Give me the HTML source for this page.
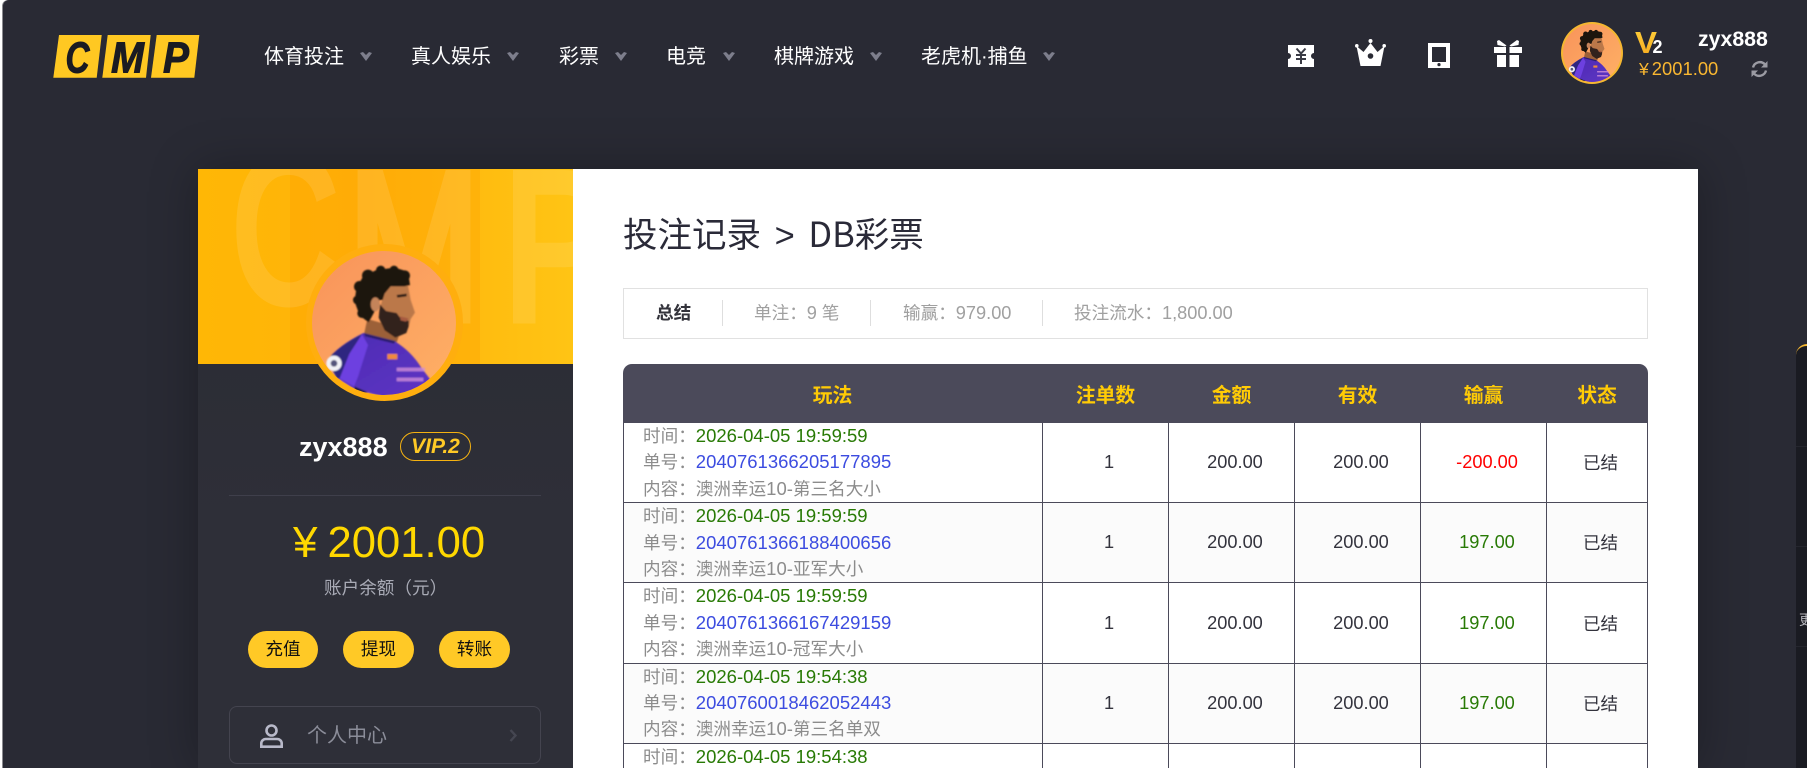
<!DOCTYPE html>
<html lang="zh-CN">
<head>
<meta charset="utf-8">
<title>投注记录</title>
<style>
*{box-sizing:border-box;margin:0;padding:0}
html,body{width:1807px;height:768px;overflow:hidden;background:#fff}
body{font-family:"Liberation Sans","Noto Sans CJK SC",sans-serif;position:relative}
.t{position:absolute;white-space:nowrap}
#page{position:absolute;left:3px;top:0;width:1804px;height:768px;background:#292a34;border-top-left-radius:6px;box-shadow:-1px 0 0 #8b8b90}
.nav{top:44px;font-size:20px;line-height:26px;color:#fff}
.chev{position:absolute;top:52px;width:12px;height:9px}
.abs{position:absolute}
#wrap{position:absolute;left:198px;top:169px;width:1500px;height:599px;box-shadow:0 0 45px rgba(0,0,0,.28)}
#side{position:absolute;left:198px;top:169px;width:375px;height:599px;background:linear-gradient(#2a2b33,#2e2f38 60%);overflow:hidden}
#main{position:absolute;left:573px;top:169px;width:1125px;height:599px;background:#fff}
.btn{position:absolute;top:631px;height:37px;background:#ffc926;border-radius:19px;text-align:center;font-size:17.6px;line-height:36px;color:#111}
#sum{position:absolute;left:623px;top:288px;width:1025px;height:51px;border:1px solid #e1e1e1}
.dv{position:absolute;top:300px;width:1px;height:26px;background:#dedede}
.s{top:300px;font-size:17.6px;line-height:26px;color:#a0a0a0}
.n{font-size:18.2px}
#tw{position:absolute;left:623px;top:364px;width:1025px;height:404px;overflow:hidden}
table{width:1025px;border-collapse:separate;border-spacing:0;table-layout:fixed;background:#fff}
th{height:59px;background:#4b4a5a;color:#ffcb05;font-size:19.8px;font-weight:700;text-align:center;padding-right:1px}
th:first-child{border-top-left-radius:9px}
th:last-child{border-top-right-radius:9px}
td{height:79.4px;border-bottom:1px solid #4b4a5a;border-right:1px solid #4b4a5a;text-align:center;padding-left:7px;font-size:17.6px;color:#33333d;vertical-align:middle}
td:first-child{border-left:1px solid #4b4a5a;text-align:left;padding-left:19px;color:#8c8c8c;line-height:26.4px;vertical-align:top}
td:first-child .v{font-size:18.5px}
tr:nth-child(even) td{background:#fbfbfb}
.g{color:#287a05}.b{color:#3c4ce0}.r{color:#ff0000}
.v{font-size:18.2px}
#rp{position:absolute;left:1796px;top:344px;width:11px;height:424px;background:#1a1b22;border-top:2px solid #f5b731;border-top-left-radius:12px;overflow:hidden}
</style>
</head>
<body>
<svg width="0" height="0" style="position:absolute">
<defs>
<linearGradient id="ag" x1="0" y1="0" x2="1" y2="1"><stop offset="0" stop-color="#f8925a"/><stop offset="1" stop-color="#ffb266"/></linearGradient>
<linearGradient id="vg" x1="0" y1="0" x2="0" y2="1"><stop offset="0" stop-color="#ffd23c"/><stop offset="1" stop-color="#f5a81e"/></linearGradient>
<linearGradient id="sg" x1="0" y1="0" x2="1" y2="1"><stop offset="0" stop-color="#4a2bb2"/><stop offset="1" stop-color="#5f33c4"/></linearGradient>
<clipPath id="ac"><circle cx="238" cy="234" r="216"/></clipPath>
<filter id="bl" x="-5%" y="-5%" width="110%" height="110%"><feGaussianBlur stdDeviation="2.2"/></filter>
<symbol id="head" viewBox="22 18 432 432">
<g clip-path="url(#ac)">
<rect x="0" y="0" width="480" height="480" fill="url(#ag)"/>
<g filter="url(#bl)">
<path d="M188 222L290 250L275 296L178 268Z" fill="#9c6039"/>
<path d="M66 347Q100 302 176 264L272 290Q320 320 350 368L378 405L350 445L240 456L150 432L96 398Z" fill="url(#sg)"/>
<path d="M68 345Q105 300 172 268L132 330L105 400L96 398Z" fill="#2d2880"/>
<path d="M172 268L190 300L160 395L148 425L105 400L135 325Z" fill="#6d3fe0"/>
<path d="M178 264L272 288L268 296L182 274Z" fill="#2a1f70"/>
<path d="M150 425L190 442L150 450Z" fill="#201a3a"/>
<path d="M236 150L252 124L310 122L318 165L331 203L318 222L314 238L305 262L270 276L232 240L224 200Z" fill="#bb784a"/>
<path d="M226 178L244 198L276 204L286 218L312 228L312 244L305 264L272 278L240 256L222 218Z" fill="#33201a"/>
<path d="M286 214L312 220L304 230L288 226Z" fill="#a65a40"/>
<path d="M276 150L306 146L306 154L278 158Z" fill="#2a1a12"/>
<path d="M150 170L155 130L175 95L215 75L270 68L310 80L316 120L300 124L258 124L240 146L234 165L225 165L212 195L192 232L165 212Z" fill="#1b1310"/>
<circle cx="165" cy="125" r="17" fill="#1b1310"/><circle cx="190" cy="92" r="18" fill="#1b1310"/><circle cx="228" cy="76" r="14" fill="#1b1310"/><circle cx="268" cy="75" r="13" fill="#1b1310"/><circle cx="300" cy="92" r="16" fill="#1b1310"/><circle cx="158" cy="165" r="13" fill="#1b1310"/><circle cx="172" cy="205" r="14" fill="#1b1310"/>
<ellipse cx="212" cy="178" rx="14" ry="21" fill="#c4845a"/>
<circle cx="88" cy="355" r="23" fill="#f2f2f6"/>
<circle cx="88" cy="355" r="10" fill="#55557c"/>
<rect x="248" y="327" width="30" height="16" fill="#f08a3c"/>
<rect x="276" y="368" width="85" height="11" fill="#cf8fd8" opacity=".8"/>
<rect x="276" y="398" width="80" height="11" fill="#cf8fd8" opacity=".8"/>
</g>
</g>
</symbol>
</defs>
</svg>

<div id="page"></div>

<!-- logo -->
<svg class="abs" style="left:0;top:0" width="210" height="90">
<polygon points="59,35 101.7,35 96.7,77.7 53.3,77.7" fill="#ffc822"/>
<polygon points="107.7,35 150.7,35 146,77.7 102.3,77.7" fill="#ffc822"/>
<polygon points="156.7,35 199.3,35 194.3,77.7 151,77.7" fill="#ffc822"/>
<g font-family="Liberation Sans" font-weight="700" font-style="italic" font-size="44" fill="#1a1b22" stroke="#1a1b22" stroke-width="1">
<text x="65.5" y="72.5" textLength="24" lengthAdjust="spacingAndGlyphs">C</text>
<text x="111" y="72.5" textLength="33" lengthAdjust="spacingAndGlyphs">M</text>
<text x="163" y="72.5" textLength="26" lengthAdjust="spacingAndGlyphs">P</text>
</g>
</svg>

<!-- nav -->
<div class="t nav" style="left:264px">体育投注</div>
<svg class="chev" style="left:360px" viewBox="0 0 12 9"><path d="M0 1L3 0L6 3L9 0L12 1L6 9Z" fill="#7d7e8c"/></svg>
<div class="t nav" style="left:411px">真人娱乐</div>
<svg class="chev" style="left:507px" viewBox="0 0 12 9"><path d="M0 1L3 0L6 3L9 0L12 1L6 9Z" fill="#7d7e8c"/></svg>
<div class="t nav" style="left:559px">彩票</div>
<svg class="chev" style="left:615px" viewBox="0 0 12 9"><path d="M0 1L3 0L6 3L9 0L12 1L6 9Z" fill="#7d7e8c"/></svg>
<div class="t nav" style="left:666px">电竞</div>
<svg class="chev" style="left:723px" viewBox="0 0 12 9"><path d="M0 1L3 0L6 3L9 0L12 1L6 9Z" fill="#7d7e8c"/></svg>
<div class="t nav" style="left:774px">棋牌游戏</div>
<svg class="chev" style="left:870px" viewBox="0 0 12 9"><path d="M0 1L3 0L6 3L9 0L12 1L6 9Z" fill="#7d7e8c"/></svg>
<div class="t nav" style="left:921px">老虎机·捕鱼</div>
<svg class="chev" style="left:1043px" viewBox="0 0 12 9"><path d="M0 1L3 0L6 3L9 0L12 1L6 9Z" fill="#7d7e8c"/></svg>

<!-- top right icons -->
<svg class="abs" style="left:1288px;top:45px" width="26" height="22" viewBox="0 0 26 22">
<path d="M0 0H26V8A3 3 0 0 0 26 14V22H0V14A3 3 0 0 0 0 8Z" fill="#fff"/>
<path d="M8.5 3.5L13 8.5L17.5 3.5M8 10H18M8 14H18M13 8.5V19" fill="none" stroke="#3a3b45" stroke-width="2"/>
</svg>
<svg class="abs" style="left:1355px;top:39px" width="31" height="27" viewBox="0 0 31 27">
<path d="M1.5 7L8.5 13L15.5 4L22.5 13L29.5 7L25.5 27H5.5Z" fill="#fff"/>
<circle cx="1.8" cy="6.8" r="1.8" fill="#fff"/><circle cx="15.5" cy="2" r="2" fill="#fff"/><circle cx="29.2" cy="6.8" r="1.8" fill="#fff"/>
<circle cx="15.5" cy="17" r="2.8" fill="#292a34"/>
</svg>
<svg class="abs" style="left:1428px;top:43px" width="22" height="25" viewBox="0 0 22 25">
<path fill-rule="evenodd" d="M0 0H22V25H0ZM4 4V19H18V4Z" fill="#fff"/>
<circle cx="11" cy="21.6" r="1.6" fill="#292a34"/>
</svg>
<svg class="abs" style="left:1494px;top:40px" width="28" height="27" viewBox="0 0 28 27">
<path d="M0 7H12V13H0ZM15.5 7H28V13H15.5ZM3 15H12V27H3ZM15.5 15H25V27H15.5ZM3 1L5 0L12.5 5.5L11 6.5L3.5 5ZM25 1L23 0L15.5 5.5L17 6.5L24.5 5Z" fill="#fff"/>
</svg>

<!-- small avatar -->
<div class="abs" style="left:1561px;top:22px;width:62px;height:62px;border-radius:50%;background:#f5b731"></div>
<svg class="abs" style="left:1563px;top:24px" width="58" height="58"><use href="#head" width="58" height="58"/></svg>
<svg class="abs" style="left:1630px;top:25px" width="40" height="32" viewBox="0 0 40 32">
<text x="5" y="28" font-family="Liberation Sans" font-weight="700" font-size="31" fill="url(#vg)" textLength="22" lengthAdjust="spacingAndGlyphs">V</text>
<text x="22.5" y="28" font-family="Liberation Sans" font-weight="700" font-size="18" fill="#fff">2</text>
</svg>
<div class="t" style="left:1698px;top:26px;font-size:21.3px;line-height:26px;font-weight:700;color:#fff">zyx888</div>
<div class="t" style="left:1639px;top:56px;font-size:17.6px;line-height:26px;color:#f9b731">¥<span style="margin-left:3px;font-size:18.4px">2001.00</span></div>
<svg class="abs" style="left:1751px;top:60px" width="17" height="18" viewBox="0 0 17 18">
<path d="M2 7.5A7 7 0 0 1 14 4.5M15 10.5A7 7 0 0 1 3 13.5" fill="none" stroke="#9b9ba3" stroke-width="2.4"/>
<path d="M16.5 1V7.5H10ZM.5 17V10.5H7Z" fill="#9b9ba3"/>
</svg>

<div id="wrap"></div>

<!-- sidebar -->
<div id="side">
<svg class="abs" style="left:0;top:0" width="375" height="195" viewBox="0 0 375 195">
<defs><linearGradient id="bg" x1="0" y1="0" x2="1" y2="0"><stop offset="0" stop-color="#ffb705"/><stop offset=".45" stop-color="#ffb30a"/><stop offset="1" stop-color="#ffc414"/></linearGradient></defs>
<rect width="375" height="195" fill="url(#bg)"/>
<rect x="92" y="0" width="190" height="195" fill="#ff9a00" opacity=".28"/>
<g font-family="Liberation Sans" font-size="210" fill="#ffffff" stroke="#ffffff" stroke-width="9" opacity=".1">
<text x="34" y="132" textLength="106" lengthAdjust="spacingAndGlyphs">C</text>
<text x="150" y="150" textLength="132" lengthAdjust="spacingAndGlyphs">M</text>
<text x="305" y="150" textLength="110" lengthAdjust="spacingAndGlyphs">P</text>
</g>
</svg>
</div>

<!-- big avatar -->
<div class="abs" style="left:305.5px;top:244px;width:157px;height:157px;border-radius:50%;background:#ffae0e"></div>
<svg class="abs" style="left:312px;top:251px" width="144" height="144"><use href="#head" width="144" height="144"/></svg>

<div class="t" style="left:299px;top:432px;font-size:27px;line-height:30px;font-weight:700;color:#fff">zyx888</div>
<div class="abs" style="left:400px;top:432px;width:71px;height:29px;border:1px solid #f5b211;border-radius:15px;text-align:center;font-size:21px;line-height:27px;font-weight:700;font-style:italic;color:#ffc926">VIP.2</div>
<div class="abs" style="left:229px;top:495px;width:312px;height:1px;background:#3f3f4b"></div>

<div class="t" style="left:293px;top:516px;font-size:44px;line-height:54px;color:#ffd800"><span style="font-size:44px">¥</span><span style="margin-left:10px;font-size:43.6px">2001.00</span></div>
<div class="t" style="left:324px;top:575px;font-size:17.6px;line-height:26px;color:#a9abb6">账户余额（元）</div>

<div class="btn" style="left:248px;width:70px">充值</div>
<div class="btn" style="left:343px;width:71px">提现</div>
<div class="btn" style="left:439px;width:71px">转账</div>

<div class="abs" style="left:229px;top:706px;width:312px;height:58px;border:1px solid #44444f;border-radius:8px"></div>
<svg class="abs" style="left:260px;top:724px" width="23" height="24" viewBox="0 0 23 24">
<circle cx="11.5" cy="6.5" r="5" fill="none" stroke="#b8b9c9" stroke-width="2.6"/>
<path d="M1.3 22.7V19.5A4.5 4.5 0 0 1 5.8 15H17.2A4.5 4.5 0 0 1 21.7 19.5V22.7Z" fill="none" stroke="#b8b9c9" stroke-width="2.6"/>
</svg>
<div class="t" style="left:307px;top:722px;font-size:20px;line-height:28px;color:#8b8d99">个人中心</div>
<svg class="abs" style="left:509px;top:729px" width="8" height="13" viewBox="0 0 8 13"><path d="M1.5 1L6.5 6.5L1.5 12" fill="none" stroke="#454651" stroke-width="2.4"/></svg>

<!-- main -->
<div id="main"></div>
<div class="t" style="left:623px;top:209px;font-size:34.5px;line-height:46px;color:#2a2a38;word-spacing:4px">投注记录 <span style="font-weight:400">&gt;</span> <span style="font-family:'Noto Sans CJK SC',sans-serif">DB</span>彩票</div>

<div id="sum"></div>
<div class="t s" style="left:656px;color:#33333b;font-weight:700">总结</div>
<div class="dv" style="left:722px"></div>
<div class="t s" style="left:754px">单注：<span class="n">9</span> 笔</div>
<div class="dv" style="left:870px"></div>
<div class="t s" style="left:903px">输赢：<span class="n">979.00</span></div>
<div class="dv" style="left:1042px"></div>
<div class="t s" style="left:1074px">投注流水：<span class="n">1,800.00</span></div>

<div id="tw">
<table>
<colgroup><col style="width:420px"><col style="width:126px"><col style="width:126px"><col style="width:126px"><col style="width:126px"><col style="width:101px"></colgroup>
<thead><tr><th>玩法</th><th>注单数</th><th>金额</th><th>有效</th><th>输赢</th><th>状态</th></tr></thead>
<tbody>
<tr><td>时间：<span class="g v">2026-04-05 19:59:59</span><br>单号：<span class="b v">2040761366205177895</span><br>内容：澳洲幸运<span class="v">10-</span>第三名大小</td><td class="v">1</td><td class="v">200.00</td><td class="v">200.00</td><td class="v r">-200.00</td><td>已结</td></tr>
<tr><td>时间：<span class="g v">2026-04-05 19:59:59</span><br>单号：<span class="b v">2040761366188400656</span><br>内容：澳洲幸运<span class="v">10-</span>亚军大小</td><td class="v">1</td><td class="v">200.00</td><td class="v">200.00</td><td class="v g">197.00</td><td>已结</td></tr>
<tr><td>时间：<span class="g v">2026-04-05 19:59:59</span><br>单号：<span class="b v">2040761366167429159</span><br>内容：澳洲幸运<span class="v">10-</span>冠军大小</td><td class="v">1</td><td class="v">200.00</td><td class="v">200.00</td><td class="v g">197.00</td><td>已结</td></tr>
<tr><td>时间：<span class="g v">2026-04-05 19:54:38</span><br>单号：<span class="b v">2040760018462052443</span><br>内容：澳洲幸运<span class="v">10-</span>第三名单双</td><td class="v">1</td><td class="v">200.00</td><td class="v">200.00</td><td class="v g">197.00</td><td>已结</td></tr>
<tr><td>时间：<span class="g v">2026-04-05 19:54:38</span></td><td></td><td></td><td></td><td></td><td></td></tr>
</tbody>
</table>
</div>

<!-- right panel -->
<div id="rp">
<div class="abs" style="left:0;top:100px;width:11px;height:1px;background:#25262e"></div>
<div class="abs" style="left:0;top:200px;width:11px;height:1px;background:#25262e"></div>
<div class="abs" style="left:0;top:300px;width:11px;height:1px;background:#25262e"></div>
<div class="t" style="left:3px;top:264px;font-size:14px;line-height:20px;color:#b5b5bb">更</div>
</div>
</body>
</html>
